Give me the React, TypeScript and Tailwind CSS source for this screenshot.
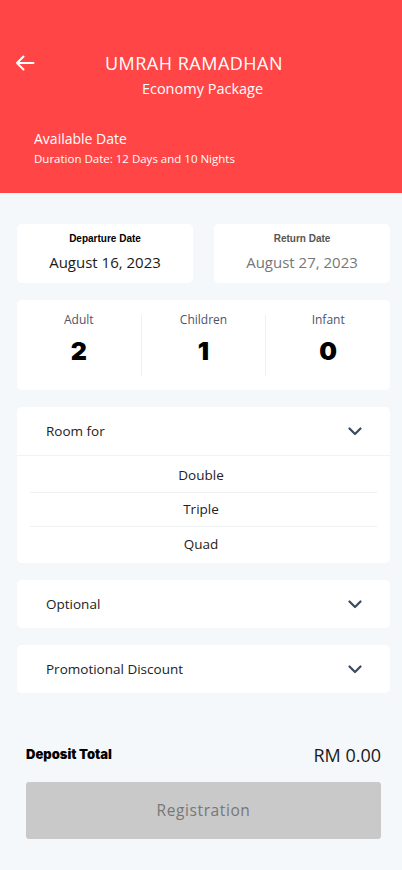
import React from "react";

const Chevron = () => (
  <svg width="14" height="9" viewBox="0 0 14 9" fill="none">
    <path d="M1.5 1.5 L7 7 L12.5 1.5" stroke="#3b4a60" strokeWidth="2.2" strokeLinecap="round" strokeLinejoin="round" />
  </svg>
);

export default function App() {
  const font = { fontFamily: '"Open Sans", "Noto Sans", sans-serif' };
  return (
    <div className="w-[402px] h-[870px] bg-[#f5f8fa] flex flex-col" style={font}>
      <div className="bg-[#ff4545] h-[193px] text-white flex flex-col">
        <div className="relative h-[64px] pt-[52px]">
          <svg className="absolute left-[15px] top-[55px]" width="20" height="16" viewBox="0 0 20 16" fill="none">
            <path d="M18.5 8 H2 M8.5 1.5 L2 8 L8.5 14.5" stroke="white" strokeWidth="2" strokeLinecap="round" strokeLinejoin="round" />
          </svg>
          <div className="text-center text-[18px] leading-[22px] pr-[14px] tracking-[0.5px]">UMRAH RAMADHAN</div>
        </div>
        <div className="text-center text-[14.5px] leading-[20px] pl-[3px] mt-[15px]">Economy Package</div>
        <div className="pl-[34px] mt-[31px] text-[14px] leading-[18px]">Available Date</div>
        <div className="pl-[34px] mt-[3px] text-[11.5px] leading-[16px]">Duration Date: 12 Days and 10 Nights</div>
      </div>

      <div className="pl-[17px] pr-[12px] pt-[31px] flex flex-col">
        <div className="flex gap-[21px]">
          <div className="flex-1 bg-white rounded-[5px] h-[59px] flex flex-col items-center pt-[8px]">
            <div className="text-[10px] font-bold text-black leading-[14px]" style={{ fontFamily: '"Liberation Sans", Arial, sans-serif' }}>Departure Date</div>
            <div className="text-[15px] text-[#1a1a1a] leading-[22px] mt-[5px]">August 16, 2023</div>
          </div>
          <div className="flex-1 bg-white rounded-[5px] h-[59px] flex flex-col items-center pt-[8px]">
            <div className="text-[10px] font-bold text-[#555] leading-[14px]" style={{ fontFamily: '"Liberation Sans", Arial, sans-serif' }}>Return Date</div>
            <div className="text-[15px] text-[#777] leading-[22px] mt-[5px]">August 27, 2023</div>
          </div>
        </div>

        <div className="mt-[17px] bg-white rounded-[5px] h-[90px] flex items-center">
          {[
            ["Adult", "2"],
            ["Children", "1"],
            ["Infant", "0"],
          ].map(([label, n], i) => (
            <div key={label} className={`flex-1 h-[61px] flex flex-col items-center ${i > 0 ? "border-l border-[#eef0f2]" : ""}`}>
              <div className="text-[12px] text-[#4a5568] leading-[16px] -mt-[3px]">{label}</div>
              <div className="text-[25px] font-black text-black leading-[30px] mt-[8px]" style={{ fontFamily: 'Inter, sans-serif' }}>{n}</div>
            </div>
          ))}
        </div>

        <div className="mt-[17px] bg-white rounded-[5px] flex flex-col">
          <div className="h-[49px] flex items-center justify-between pl-[29px] pr-[28px] border-b border-[#f1f3f5]">
            <span className="text-[13.5px] text-[#222]">Room for</span>
            <Chevron />
          </div>
          <div className="px-[13px] flex flex-col pt-[3px] pb-[2px]">
            {["Double", "Triple", "Quad"].map((t, i) => (
              <div key={t} className={`h-[34px] flex items-center justify-center pr-[5px] text-[13.5px] text-[#222] ${i < 2 ? "border-b border-[#eef0f2]" : ""}`}>{t}</div>
            ))}
          </div>
        </div>

        <div className="mt-[17px] bg-white rounded-[5px] h-[48px] flex items-center justify-between pl-[29px] pr-[28px]">
          <span className="text-[13.5px] text-[#222]">Optional</span>
          <Chevron />
        </div>

        <div className="mt-[17px] bg-white rounded-[5px] h-[48px] flex items-center justify-between pl-[29px] pr-[28px]">
          <span className="text-[13.5px] text-[#222]">Promotional Discount</span>
          <Chevron />
        </div>

        <div className="mt-[49px] pl-[9px] pr-[9px] flex items-center justify-between h-[26px]">
          <span className="text-[13px] font-black text-black" style={{ fontFamily: 'Inter, sans-serif' }}>Deposit Total</span>
          <span className="text-[18px] text-[#1a1a1a]">RM 0.00</span>
        </div>

        <div className="mt-[14px] mx-[9px] h-[57px] rounded-[3px] bg-[#c9c9c9] flex items-center justify-center">
          <span className="text-[15.5px] text-[#777] tracking-[0.6px]">Registration</span>
        </div>
      </div>
    </div>
  );
}
